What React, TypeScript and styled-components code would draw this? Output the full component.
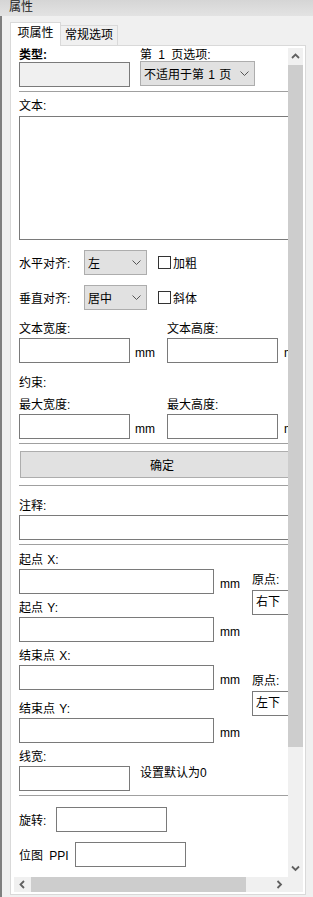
import React from 'react';
import styled, { createGlobalStyle } from 'styled-components';

const GlobalStyle = createGlobalStyle`
  html, body {
    margin: 0;
    padding: 0;
    background: #f0f0f0;
  }
  body {
    font-family: "Liberation Sans", "Noto Sans CJK SC", sans-serif;
    font-size: 12px;
    color: #000;
  }
`;

const Window = styled.div`
  width: 313px;
  height: 897px;
  display: flex;
  flex-direction: column;
  overflow: hidden;
  background: #f0f0f0;
`;

const TitleBar = styled.div`
  flex: none;
  height: 16px;
  line-height: 15px;
  padding-left: 9px;
  background: linear-gradient(#d5d5d5, #e3e3e3);
  color: #222;
`;

const Body = styled.div`
  flex: 1;
  min-height: 0;
  display: flex;
  flex-direction: column;
  border-left: 2px solid #7f7f7f;
  padding: 6px 7px 2px 8px;
`;

const TabStrip = styled.div`
  flex: none;
  display: flex;
  align-items: flex-end;
  height: 23px;
  position: relative;
  z-index: 1;
`;

const Tab = styled.div<{ $active?: boolean }>`
  box-sizing: border-box;
  width: ${p => (p.$active ? 51 : 57)}px;
  height: ${p => (p.$active ? 24 : 20)}px;
  margin-bottom: ${p => (p.$active ? -1 : 0)}px;
  border: 1px solid #d9d9d9;
  border-bottom: none;
  ${p => (p.$active ? '' : 'border-left: none;')}
  background: ${p => (p.$active ? '#fff' : '#f0f0f0')};
  text-align: center;
  line-height: ${p => (p.$active ? 20 : 18)}px;
  white-space: nowrap;
`;

const Panel = styled.div`
  flex: 1;
  min-height: 0;
  border: 1px solid #d9d9d9;
  background: #fff;
  padding: 2px 2px 2px 3px;
  display: grid;
  grid-template-columns: 274px 15px;
  grid-template-rows: 829px 15px;
`;

const Viewport = styled.div`
  overflow: hidden;
  background: #fff;
`;

const Content = styled.div`
  width: 300px;
  padding: 1px 0 0 5px;
`;

const Label = styled.div<{ $top?: number; $bold?: boolean }>`
  height: 16px;
  line-height: 16px;
  margin-top: ${p => p.$top ?? 0}px;
  font-weight: ${p => (p.$bold ? 700 : 400)};
  white-space: nowrap;
  word-spacing: 1px;
`;

const TypeLabel = styled(Label)`
  height: 12px;
  line-height: 12px;
  word-spacing: 3px;
`;

const TextBox = styled.input<{ $w: number; $disabled?: boolean; $top?: number }>`
  box-sizing: border-box;
  display: block;
  flex: none;
  width: ${p => p.$w}px;
  height: 25px;
  margin: ${p => p.$top ?? 1}px 0 0;
  padding: 0 3px;
  border: 1px solid #7a7a7a;
  border-radius: 0;
  background: ${p => (p.$disabled ? '#f0f0f0' : '#fff')};
  font: inherit;
  outline: none;
`;

const TextArea = styled.textarea`
  box-sizing: border-box;
  display: block;
  width: 285px;
  height: 124px;
  margin: 2px 0 0;
  border: 1px solid #7a7a7a;
  border-radius: 0;
  resize: none;
  font: inherit;
  outline: none;
`;

const DropDown = styled.div<{ $w: number }>`
  box-sizing: border-box;
  width: ${p => p.$w}px;
  height: 25px;
  display: flex;
  align-items: center;
  padding: 0 5px 0 3px;
  border: 1px solid #adadad;
  background: #e1e1e1;
  white-space: nowrap;
  word-spacing: 1px;
  flex: none;
  svg {
    flex: none;
    margin-left: auto;
  }
`;

const OriginBox = styled.div`
  box-sizing: border-box;
  width: 56px;
  height: 25px;
  line-height: 23px;
  margin-top: 2px;
  padding-left: 3px;
  border: 1px solid #7a7a7a;
  background: #fff;
`;

const CheckBox = styled.span`
  box-sizing: border-box;
  width: 13px;
  height: 13px;
  margin: 0 2px 0 11px;
  border: 1px solid #333;
  background: #fff;
  flex: none;
`;

const Unit = styled.span<{ $gap: number }>`
  margin-left: ${p => p.$gap}px;
  margin-top: 5px;
  white-space: nowrap;
`;

const Note = styled.span`
  margin-left: 10px;
  margin-top: -14px;
  white-space: nowrap;
`;

const Separator = styled.div<{ $top: number }>`
  width: 285px;
  height: 1px;
  margin-top: ${p => p.$top}px;
  background: #a0a0a0;
`;

const Row = styled.div<{ $top?: number }>`
  display: flex;
  align-items: center;
  margin-top: ${p => p.$top ?? 0}px;
`;

const RowLabel = styled.span<{ $w: number }>`
  width: ${p => p.$w}px;
  flex: none;
  white-space: nowrap;
  word-spacing: 3px;
`;

const TwoCol = styled.div<{ $first: number; $top?: number }>`
  display: grid;
  grid-template-columns: ${p => p.$first}px auto;
  margin-top: ${p => p.$top ?? 0}px;
`;

const ConfirmButton = styled.button`
  box-sizing: border-box;
  display: block;
  width: 284px;
  height: 27px;
  margin: 7px 0 0 1px;
  border: 1px solid #adadad;
  border-radius: 0;
  background: #e1e1e1;
  font: inherit;
  color: #000;
  padding: 0;
`;

const PointGroup = styled.div<{ $top: number }>`
  display: grid;
  grid-template-columns: 233px auto;
  margin-top: ${p => p.$top}px;
`;

const OriginColumn = styled.div<{ $offset: number }>`
  padding-top: ${p => p.$offset}px;
`;

const VScroll = styled.div`
  display: flex;
  flex-direction: column;
  background: #f0f0f0;
`;

const HScroll = styled.div`
  display: flex;
  background: #f0f0f0;
`;

const Corner = styled.div`
  background: #f0f0f0;
`;

const Arrow = styled.div`
  flex: none;
  width: 15px;
  height: 17px;
  display: flex;
  align-items: center;
  justify-content: center;
`;

const HArrow = styled(Arrow)`
  width: 17px;
  height: 15px;
`;

const Thumb = styled.div<{ $size: number; $vertical?: boolean }>`
  flex: none;
  background: #cdcdcd;
  ${p => (p.$vertical ? `height: ${p.$size}px;` : `width: ${p.$size}px;`)}
`;

const Track = styled.div`
  flex: 1;
`;

const Chevron = ({ dir }: { dir: 'up' | 'down' | 'left' | 'right' }) => {
  const paths = {
    up: 'M1 5 L4.5 1.5 L8 5',
    down: 'M1 1.5 L4.5 5 L8 1.5',
    left: 'M5 1 L1.5 4.5 L5 8',
    right: 'M1.5 1 L5 4.5 L1.5 8',
  };
  const vertical = dir === 'up' || dir === 'down';
  return (
    <svg width={vertical ? 9 : 7} height={vertical ? 7 : 9} viewBox={vertical ? '0 0 9 7' : '0 0 7 9'}>
      <path d={paths[dir]} fill="none" stroke="#606060" strokeWidth="1.8" />
    </svg>
  );
};

const SelectArrow = () => (
  <svg width="9" height="5" viewBox="0 0 9 5">
    <path d="M0.5 0.5 L4.5 4.5 L8.5 0.5" fill="none" stroke="#555" strokeWidth="1" />
  </svg>
);

const UnitInput = ({ w, gap }: { w: number; gap: number }) => (
  <Row>
    <TextBox $w={w} readOnly />
    <Unit $gap={gap}>mm</Unit>
  </Row>
);

export default function App() {
  return (
    <Window>
      <GlobalStyle />
      <TitleBar>属性</TitleBar>
      <Body>
        <TabStrip>
          <Tab $active>项属性</Tab>
          <Tab>常规选项</Tab>
        </TabStrip>
        <Panel>
          <Viewport>
            <Content>
              <TwoCol $first={121}>
                <div>
                  <TypeLabel $bold>类型:</TypeLabel>
                  <TextBox $w={111} $disabled readOnly />
                </div>
                <div>
                  <TypeLabel>第 1 页选项:</TypeLabel>
                  <DropDown $w={115}>
                    不适用于第 1 页
                    <SelectArrow />
                  </DropDown>
                </div>
              </TwoCol>

              <Separator $top={4} />
              <Label $top={6}>文本:</Label>
              <TextArea readOnly />

              <Row $top={10}>
                <RowLabel $w={65}>水平对齐:</RowLabel>
                <DropDown $w={63}>
                  左
                  <SelectArrow />
                </DropDown>
                <CheckBox />
                <span>加粗</span>
              </Row>
              <Row $top={10}>
                <RowLabel $w={65}>垂直对齐:</RowLabel>
                <DropDown $w={63}>
                  居中
                  <SelectArrow />
                </DropDown>
                <CheckBox />
                <span>斜体</span>
              </Row>

              <TwoCol $first={148} $top={11}>
                <div>
                  <Label>文本宽度:</Label>
                  <UnitInput w={111} gap={5} />
                </div>
                <div>
                  <Label>文本高度:</Label>
                  <UnitInput w={111} gap={6} />
                </div>
              </TwoCol>

              <Label $top={12}>约束:</Label>
              <TwoCol $first={148} $top={6}>
                <div>
                  <Label>最大宽度:</Label>
                  <UnitInput w={111} gap={5} />
                </div>
                <div>
                  <Label>最大高度:</Label>
                  <UnitInput w={111} gap={6} />
                </div>
              </TwoCol>

              <Separator $top={4} />
              <ConfirmButton>确定</ConfirmButton>
              <Separator $top={7} />

              <Label $top={12}>注释:</Label>
              <TextBox $w={285} readOnly />

              <Separator $top={4} />

              <PointGroup $top={7}>
                <div>
                  <Label>起点 X:</Label>
                  <UnitInput w={195} gap={6} />
                  <Label $top={6}>起点 Y:</Label>
                  <UnitInput w={195} gap={6} />
                </div>
                <OriginColumn $offset={20}>
                  <Label>原点:</Label>
                  <OriginBox>右下</OriginBox>
                </OriginColumn>
              </PointGroup>

              <PointGroup $top={6}>
                <div>
                  <Label>结束点 X:</Label>
                  <UnitInput w={195} gap={6} />
                  <Label $top={11}>结束点 Y:</Label>
                  <UnitInput w={195} gap={6} />
                </div>
                <OriginColumn $offset={25}>
                  <Label>原点:</Label>
                  <OriginBox>左下</OriginBox>
                </OriginColumn>
              </PointGroup>

              <Label $top={6}>线宽:</Label>
              <Row>
                <TextBox $w={111} readOnly />
                <Note>设置默认为0</Note>
              </Row>

              <Separator $top={4} />

              <Row $top={11}>
                <RowLabel $w={37}>旋转:</RowLabel>
                <TextBox $w={111} $top={0} readOnly />
              </Row>
              <Row $top={10}>
                <RowLabel $w={56}>位图 PPI</RowLabel>
                <TextBox $w={111} $top={0} readOnly />
              </Row>
            </Content>
          </Viewport>

          <VScroll>
            <Arrow>
              <Chevron dir="up" />
            </Arrow>
            <Thumb $vertical $size={682} />
            <Track />
            <Arrow>
              <Chevron dir="down" />
            </Arrow>
          </VScroll>

          <HScroll>
            <HArrow>
              <Chevron dir="left" />
            </HArrow>
            <Thumb $size={215} />
            <Track />
            <HArrow>
              <Chevron dir="right" />
            </HArrow>
          </HScroll>
          <Corner />
        </Panel>
      </Body>
    </Window>
  );
}
